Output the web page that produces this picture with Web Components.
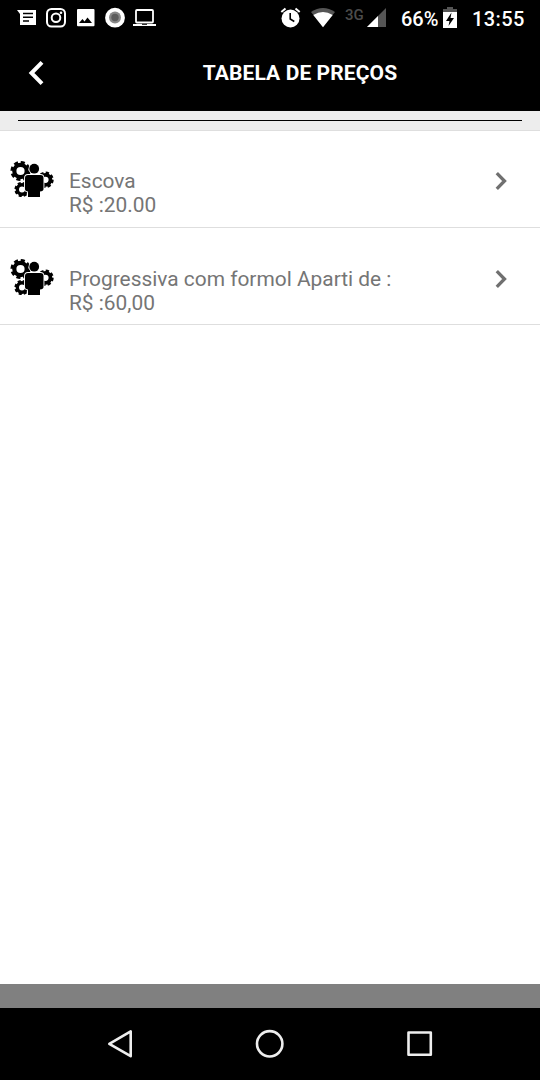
<!DOCTYPE html>
<html lang="pt-BR">
<head>
<meta charset="utf-8">
<title>Tabela de Preços</title>
<style>
    :root {
        --bar-bg: #000;
        --bar-text: #fff;
        --text-color: #757575;
        --line-color: #dedede;
    }

    body {
        margin: 0;
        height: 1080px;
        overflow: hidden;
        background: #fff;
        font-family: Roboto, "Liberation Sans", sans-serif;
    }
</style>
</head>
<body>
<price-app>
    <status-bar slot="top" network="3G" battery="66%" time="13:55"></status-bar>
    <title-bar slot="top">TABELA DE PREÇOS</title-bar>
    <price-item>Escova<span slot="price">R$ :20.00</span></price-item>
    <price-item>Progressiva com formol Aparti de :<span slot="price">R$ :60,00</span></price-item>
    <nav-bar slot="bottom"></nav-bar>
</price-app>

<script>
class PriceApp extends HTMLElement {
    connectedCallback() {
        this.attachShadow({mode: 'open'}).innerHTML = `
            <style>
                :host { display: flex; flex-direction: column; height: 1080px; }
                .divider {
                    box-sizing: border-box;
                    height: 20px;
                    padding: 9px 18px 0;
                    background: #ededed;
                    border-bottom: 1px solid var(--line-color);
                }
                .divider div { height: 1px; background: #000; }
                main { flex: 1; }
                .banner { height: 24px; background: #808080; }
            </style>
            <slot name="top"></slot>
            <div class="divider"><div></div></div>
            <main><slot></slot></main>
            <div class="banner"></div>
            <slot name="bottom"></slot>
            `;
    }
}

class StatusBar extends HTMLElement {
    connectedCallback() {
        this.attachShadow({mode: 'open'}).innerHTML = `
            <style>
                :host {
                    display: flex;
                    justify-content: space-between;
                    align-items: center;
                    height: 36px;
                    padding: 0 15px 0 17px;
                    background: var(--bar-bg);
                    color: var(--bar-text);
                    font-size: 20px;
                    line-height: 24px;
                    white-space: nowrap;
                }
                .group { display: flex; align-items: center; }
                svg { display: block; flex: none; }
                .left { gap: 10px; }
                .network { width: 22px; margin: 0 0 7px 10px; font-size: 15px; font-weight: 500; line-height: 18px; color: #4b4b4b; }
                .battery { width: 42px; margin: 1px 0 0 15px; font-weight: 500; }
                .time { width: 53px; margin: 1px 0 0 15px; font-weight: 500; letter-spacing: 0.4px; }
            </style>
            <div class="group left">
                <svg width="19" height="22" viewBox="17 7 19 22">
                    <path d="M17 10H36V25H20V14Z" fill="#fff"/>
                    <path d="M23 13.5H33M23 17.2H33M23 21H29" stroke="#000" stroke-width="1.5"/>
                </svg>
                <svg width="20" height="22" viewBox="46 7 20 22">
                    <g fill="none" stroke="#fff" stroke-width="2">
                        <rect x="47" y="9" width="18" height="17.500" rx="4.500"/>
                        <circle cx="56" cy="17.700" r="4.300"/>
                    </g>
                    <circle cx="61" cy="12.700" r="1.300" fill="#fff"/>
                </svg>
                <svg width="19" height="22" viewBox="76 7 19 22">
                    <rect x="77" y="9" width="17.500" height="17.300" rx="1" fill="#fff"/>
                    <path d="M79 23L82.500 19L84.500 21.500L87.500 17.500L92 23Z" fill="#000"/>
                </svg>
                <svg width="20" height="22" viewBox="105 7 20 22">
                    <circle cx="115" cy="17.700" r="9.900" fill="#fff"/>
                    <circle cx="115" cy="17.500" r="6" fill="#888"/>
                    <circle cx="115" cy="17.500" r="3.700" fill="#5c5c5c"/>
                </svg>
                <svg width="23" height="22" viewBox="133 7 23 22" style="margin-left:-2px">
                    <rect x="136" y="10" width="17" height="12.500" rx="1" fill="none" stroke="#fff" stroke-width="1.800"/>
                    <path d="M133 24H156V26H133Z" fill="#fff"/>
                    <path d="M142 24.300H147" stroke="#000"/>
                </svg>
            </div>
            <div class="group">
                <svg width="21" height="22" viewBox="280 7 21 22">
                    <circle cx="290.500" cy="18.500" r="9" fill="#fff"/>
                    <path d="M281.300 12L285.500 8.500M299.700 12L295.500 8.500" stroke="#fff" stroke-width="2"/>
                    <path d="M290.200 13V19L294.300 21.500" fill="none" stroke="#000" stroke-width="1.600"/>
                </svg>
                <svg width="24" height="22" viewBox="311 7 24 22" style="margin-left:10px">
                    <path d="M311 12Q323 4 335 12L323 27Z" fill="#555"/>
                    <path d="M313.300 15Q323 9 332.700 15L323 27.300Z" fill="#fff"/>
                </svg>
                <span class="network"></span>
                <svg width="19" height="22" viewBox="367 7 19 22">
                    <path d="M386 8V27H367Z" fill="#555"/>
                    <path d="M378 16V27H367Z" fill="#fff"/>
                </svg>
                <span class="battery"></span>
                <svg width="14" height="22" viewBox="443 7 14 22">
                    <path d="M443 9H447V7H453V9H457V13H443Z" fill="#555"/>
                    <path d="M443 12H457V28H443Z" fill="#fff"/>
                    <path d="M451.500 12.500L446 21H449.500L448.500 26L454 18H450.500Z" fill="#000"/>
                </svg>
                <span class="time"></span>
            </div>
            `;

        for (let name of ['network', 'battery', 'time']) {
            this.shadowRoot.querySelector('.' + name).textContent = this.getAttribute(name) ?? '';
        }
    }
}

class TitleBar extends HTMLElement {
    connectedCallback() {
        this.attachShadow({mode: 'open'}).innerHTML = `
            <style>
                :host {
                    display: grid;
                    grid-template-columns: 60px 480px;
                    align-items: center;
                    height: 75px;
                    background: var(--bar-bg);
                    color: var(--bar-text);
                }
                svg { display: block; margin: 0 0 1px 24px; }
                h1 {
                    margin: 0 0 2px;
                    font-size: 21px;
                    letter-spacing: 0.1px;
                    line-height: 24px;
                    text-align: center;
                }
            </style>
            <svg width="24" height="28" viewBox="24 59 24 28">
                <path d="M42 62.300L31.500 73L42 83.700" fill="none" stroke="#fff" stroke-width="4"/>
            </svg>
            <h1><slot></slot></h1>
            `;
    }
}

class PriceItem extends HTMLElement {
    connectedCallback() {
        this.attachShadow({mode: 'open'}).innerHTML = `
            <style>
                :host {
                    display: flex;
                    box-sizing: border-box;
                    height: 97px;
                    padding: 28px 30px 0 9px;
                    border-bottom: 1px solid var(--line-color);
                    color: var(--text-color);
                    font-size: 20.9px;
                    line-height: 24.3px;
                }
                :host(:not(:first-of-type)) { padding-top: 28.6px; }
                svg { display: block; flex: none; }
                .text { flex: 1; margin: 10px 0 0 14px; white-space: nowrap; }
                .price { display: block; }
                .arrow { margin-top: 11px; }
            </style>
            <svg width="46" height="42" viewBox="9 159 46 42">
                <!-- gears: solid ring plus a dashed ring for the teeth -->
                <g fill="none" stroke="#000">
                    <circle cx="20.500" cy="171" r="6.200" stroke-width="4.200"/>
                    <circle cx="20.500" cy="171" r="8.800" stroke-width="2.600" stroke-dasharray="4.100 2.811"/>
                    <circle cx="45.500" cy="179.800" r="5" stroke-width="3.800"/>
                    <circle cx="45.500" cy="179.800" r="7" stroke-width="2.400" stroke-dasharray="3.300 2.198"/>
                    <circle cx="22" cy="189.500" r="4.700" stroke-width="3.400"/>
                    <circle cx="22" cy="189.500" r="6.400" stroke-width="2.400" stroke-dasharray="3 2.027"/>
                </g>
                <circle cx="34.200" cy="168.700" r="4.900" stroke="#fff" stroke-width="1.500" fill="#000" paint-order="stroke"/>
                <path d="M28 175H40.500Q43.500 175 43.500 178V189Q43.500 191 40 191.500V197H28V191.500Q25 191 25 189V178Q25 175 28 175Z"
                    stroke="#fff" stroke-width="1.800" fill="#000" paint-order="stroke"/>
            </svg>
            <div class="text"><slot></slot><span class="price"><slot name="price"></slot></span></div>
            <svg class="arrow" width="16" height="22" viewBox="494 170 16 22">
                <path d="M496.800 173.200L504.500 181L496.800 188.800" fill="none" stroke="#707070" stroke-width="3.300"/>
            </svg>
            `;
    }
}

class NavBar extends HTMLElement {
    connectedCallback() {
        this.attachShadow({mode: 'open'}).innerHTML = `
            <style>
                :host {
                    display: flex;
                    justify-content: space-between;
                    align-items: center;
                    height: 72px;
                    padding: 0 105px;
                    background: var(--bar-bg);
                }
                svg { display: block; fill: none; stroke: #eee; stroke-width: 2.6; stroke-linejoin: round; }
            </style>
            <svg width="30" height="30" viewBox="105 1029 30 30"><path d="M130.700 1031.300V1056.200L109.300 1043.800Z"/></svg>
            <svg width="30" height="30" viewBox="255 1029 30 30"><circle cx="269.700" cy="1043.800" r="12.700"/></svg>
            <svg width="30" height="30" viewBox="405 1029 30 30"><rect x="408.500" y="1032.500" width="22.300" height="22.300"/></svg>
            `;
    }
}

customElements.define('price-app', PriceApp);
customElements.define('status-bar', StatusBar);
customElements.define('title-bar', TitleBar);
customElements.define('price-item', PriceItem);
customElements.define('nav-bar', NavBar);
</script>
</body>
</html>
